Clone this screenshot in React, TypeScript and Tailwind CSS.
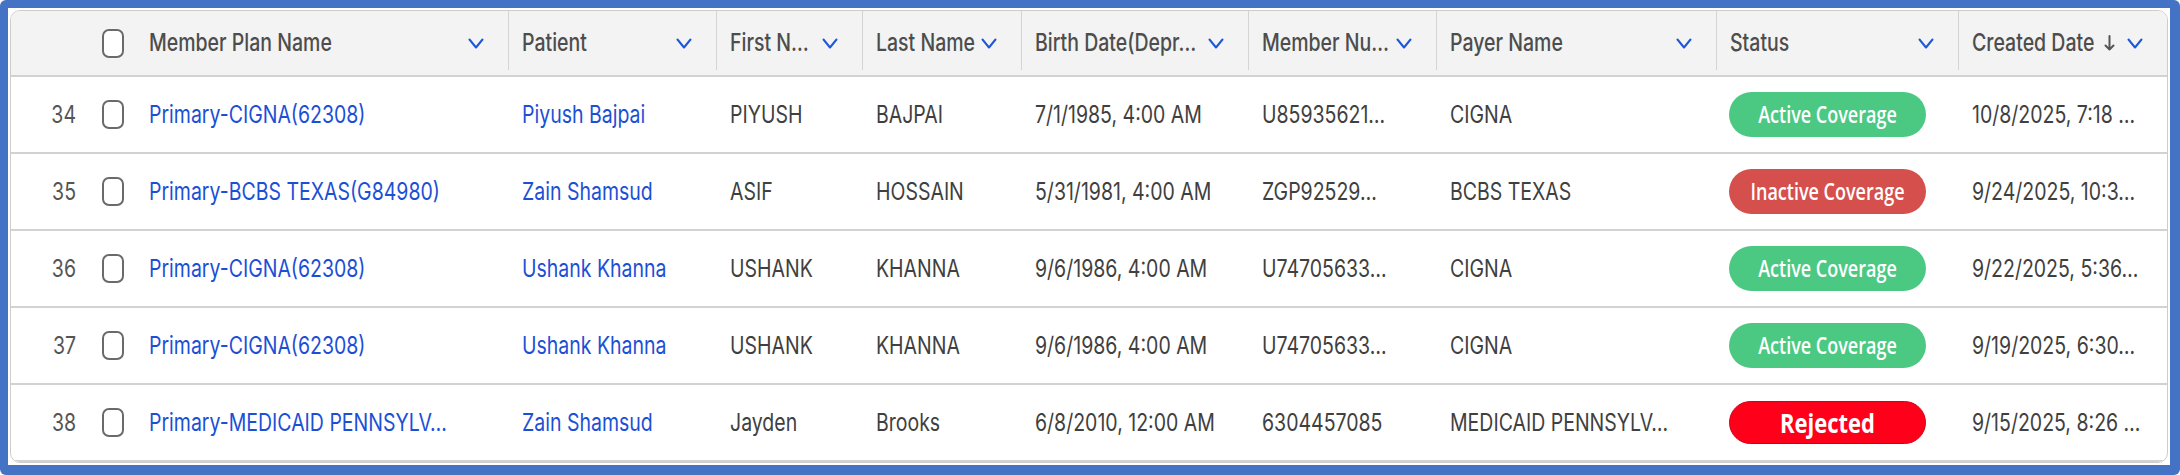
import React from 'react';

type Status = 'active' | 'inactive' | 'rejected';

type Row = {
  num: number;
  plan: string;
  patient: string;
  first: string;
  last: string;
  birth: string;
  member: string;
  payer: string;
  status: Status;
  created: string;
};

const columns: { label: string; sorted?: boolean; first?: boolean }[] = [
  { label: 'Member Plan Name', first: true },
  { label: 'Patient' },
  { label: 'First N…' },
  { label: 'Last Name' },
  { label: 'Birth Date(Depr…' },
  { label: 'Member Nu…' },
  { label: 'Payer Name' },
  { label: 'Status' },
  { label: 'Created Date', sorted: true },
];

const rows: Row[] = [
  { num: 34, plan: 'Primary-CIGNA(62308)', patient: 'Piyush Bajpai', first: 'PIYUSH', last: 'BAJPAI', birth: '7/1/1985, 4:00 AM', member: 'U85935621…', payer: 'CIGNA', status: 'active', created: '10/8/2025, 7:18 …' },
  { num: 35, plan: 'Primary-BCBS TEXAS(G84980)', patient: 'Zain Shamsud', first: 'ASIF', last: 'HOSSAIN', birth: '5/31/1981, 4:00 AM', member: 'ZGP92529…', payer: 'BCBS TEXAS', status: 'inactive', created: '9/24/2025, 10:3…' },
  { num: 36, plan: 'Primary-CIGNA(62308)', patient: 'Ushank Khanna', first: 'USHANK', last: 'KHANNA', birth: '9/6/1986, 4:00 AM', member: 'U74705633…', payer: 'CIGNA', status: 'active', created: '9/22/2025, 5:36…' },
  { num: 37, plan: 'Primary-CIGNA(62308)', patient: 'Ushank Khanna', first: 'USHANK', last: 'KHANNA', birth: '9/6/1986, 4:00 AM', member: 'U74705633…', payer: 'CIGNA', status: 'active', created: '9/19/2025, 6:30…' },
  { num: 38, plan: 'Primary-MEDICAID PENNSYLV…', patient: 'Zain Shamsud', first: 'Jayden', last: 'Brooks', birth: '6/8/2010, 12:00 AM', member: '6304457085', payer: 'MEDICAID PENNSYLV…', status: 'rejected', created: '9/15/2025, 8:26 …' },
];

const gridCols = 'grid grid-cols-[77px_47px_373px_208px_146px_159px_227px_188px_280px_242px_209px]';

function Chevron() {
  return (
    <svg width="16" height="11" viewBox="0 0 16 11" fill="none" className="shrink-0">
      <path d="M1.5 1.5 L8 9.5 L14.5 1.5" stroke="#1f58d6" strokeWidth="2" strokeLinecap="round" strokeLinejoin="round" />
    </svg>
  );
}

function SortArrow() {
  return (
    <svg width="11" height="16" viewBox="0 0 11 16" fill="none" className="shrink-0">
      <path d="M5.5 1 V14.5 M1.5 10.5 L5.5 14.5 L9.5 10.5" stroke="#555" strokeWidth="2" strokeLinecap="round" strokeLinejoin="round" />
    </svg>
  );
}

function Checkbox() {
  return <span className="block w-[22px] h-[29px] rounded-[7px] border-2 border-[#6a6a6a] bg-white" />;
}

function Pill({ status }: { status: Status }) {
  if (status === 'rejected') {
    return (
      <span className="flex items-center justify-center w-[197px] h-[43px] rounded-full bg-[#fe0019] border border-[#d40016] text-white">
        <span className="block scale-y-125 text-[22px] font-bold [font-family:'Open_Sans',sans-serif]">Rejected</span>
      </span>
    );
  }
  const active = status === 'active';
  return (
    <span className={`flex items-center justify-center w-[197px] h-[45px] rounded-full text-white ${active ? 'bg-[#4bc982]' : 'bg-[#d5504d]'}`}>
      <span className="block scale-y-125 text-[18px] font-semibold [font-family:'Open_Sans',sans-serif]">
        {active ? 'Active Coverage' : 'Inactive Coverage'}
      </span>
    </span>
  );
}

function Cell({ children, link }: { children: React.ReactNode; link?: boolean }) {
  return (
    <div className="flex items-center min-w-0 pl-[14px] pr-[8px]">
      <span className={`block truncate scale-y-125 ${link ? 'text-[#1c4fd6]' : 'text-[#404040]'}`}>{children}</span>
    </div>
  );
}

export default function App() {
  return (
    <div className="w-[2180px] h-[475px] bg-white [font-family:Inter,Roboto,sans-serif]">
      <div className="h-full flex flex-col bg-[#4472c4] rounded-[6px] pt-[8px] pl-[8px] pr-[10px] pb-[10px]">
        <div className="flex-1 bg-white p-[2px]">
          <div className="border border-[#cdcdcd] rounded-[10px] overflow-hidden bg-white">
            {/* Header */}
            <div className={`${gridCols} h-[66px] bg-[#f3f3f3] border-b-2 border-[#d2d2d2]`}>
              <div />
              <div className="flex items-center pl-[14px] pt-[1px]">
                <Checkbox />
              </div>
              {columns.map(col => (
                <div
                  key={col.label}
                  className={`flex items-center min-w-0 mb-[5px] pt-[5px] ${col.sorted ? 'pr-[22px]' : 'pr-[24px]'} ${col.first ? 'pl-[14px]' : 'pl-[13px] border-l border-[#d4d4d4]'}`}
                >
                  <span className={`block scale-y-125 text-[19.5px] font-medium text-[#4d4d4d] ${col.sorted ? 'shrink-0 whitespace-nowrap' : 'truncate'}`}>{col.label}</span>
                  {col.sorted && (
                    <span className="flex items-center pl-[10px] pr-[8px]">
                      <SortArrow />
                    </span>
                  )}
                  <span className={`flex items-center pl-[4px] ${col.sorted ? '' : 'ml-auto'}`}>
                    <Chevron />
                  </span>
                </div>
              ))}
            </div>

            {/* Rows */}
            {rows.map(row => (
              <div key={row.num} className={`${gridCols} h-[77px] border-b-2 border-[#d2d2d2] text-[19.5px]`}>
                <div className="flex items-center justify-end pr-[12px]">
                  <span className="block scale-y-125 text-[#555]">{row.num}</span>
                </div>
                <div className="flex items-center pl-[14px]">
                  <Checkbox />
                </div>
                <Cell link>{row.plan}</Cell>
                <Cell link>{row.patient}</Cell>
                <Cell>{row.first}</Cell>
                <Cell>{row.last}</Cell>
                <Cell>{row.birth}</Cell>
                <Cell>{row.member}</Cell>
                <Cell>{row.payer}</Cell>
                <div className="flex items-center pl-[13px]">
                  <Pill status={row.status} />
                </div>
                <Cell>{row.created}</Cell>
              </div>
            ))}
          </div>
        </div>
      </div>
    </div>
  );
}
